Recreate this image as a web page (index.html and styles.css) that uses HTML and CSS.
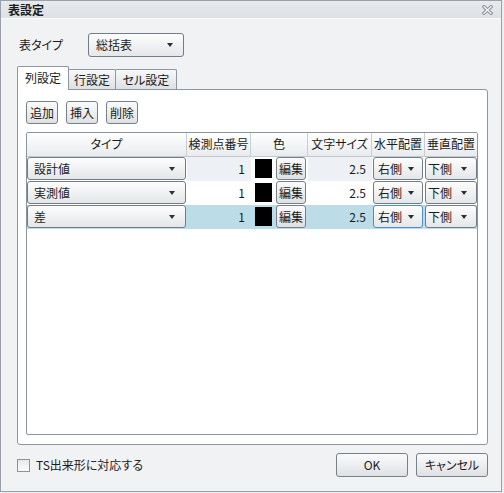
FILE: index.html
```html
<!DOCTYPE html>
<html lang="ja">
<head>
<meta charset="utf-8">
<title>表設定</title>
<link rel="stylesheet" href="styles.css">
</head>
<body>
<div class="window">
  <div class="titlebar">
    <span class="title">表設定</span>
    <svg class="close" width="11" height="10" viewBox="0 0 11 10">
      <path d="M2 1.8 L9 8.2 M9 1.8 L2 8.2" stroke="#8b9198" stroke-width="3.4" stroke-linecap="square" fill="none"/>
      <path d="M2 1.8 L9 8.2 M9 1.8 L2 8.2" stroke="#f3f4f5" stroke-width="1.4" stroke-linecap="square" fill="none"/>
    </svg>
  </div>
  <div class="body">
    <div class="type-row">
      <span class="type-label">表タイプ</span>
      <div class="combo combo-main"><span>総括表</span><span class="arrow"></span></div>
    </div>
    <div class="tabs">
      <div class="tab active tab1">列設定</div>
      <div class="tab tab2">行設定</div>
      <div class="tab tab3">セル設定</div>
    </div>
    <div class="panel">
      <div class="toolbar">
        <div class="btn">追加</div>
        <div class="btn">挿入</div>
        <div class="btn">削除</div>
      </div>
      <div class="grid">
        <div class="row head">
          <div class="th">タイプ</div>
          <div class="th">検測点番号</div>
          <div class="th">色</div>
          <div class="th">文字サイズ</div>
          <div class="th">水平配置</div>
          <div class="th last">垂直配置</div>
        </div>
        <div class="row row1">
          <div class="td"><div class="combo combo-type"><span>設計値</span><span class="arrow"></span></div></div>
          <div class="td num shade">1</div>
          <div class="td color"><span class="swatch"></span><div class="btn btn-edit">編集</div></div>
          <div class="td num shade">2.5</div>
          <div class="td"><div class="combo combo-h"><span>右側</span><span class="arrow"></span></div></div>
          <div class="td"><div class="combo combo-v"><span>下側</span><span class="arrow"></span></div></div>
        </div>
        <div class="row row2">
          <div class="td"><div class="combo combo-type"><span>実測値</span><span class="arrow"></span></div></div>
          <div class="td num">1</div>
          <div class="td color"><span class="swatch"></span><div class="btn btn-edit">編集</div></div>
          <div class="td num">2.5</div>
          <div class="td"><div class="combo combo-h"><span>右側</span><span class="arrow"></span></div></div>
          <div class="td"><div class="combo combo-v"><span>下側</span><span class="arrow"></span></div></div>
        </div>
        <div class="row row3 selected">
          <div class="td"><div class="combo combo-type"><span>差</span><span class="arrow"></span></div></div>
          <div class="td num">1</div>
          <div class="td color"><span class="swatch"></span><div class="btn btn-edit">編集</div></div>
          <div class="td num">2.5</div>
          <div class="td"><div class="combo combo-h focused"><span>右側</span><span class="arrow"></span></div></div>
          <div class="td"><div class="combo combo-v"><span>下側</span><span class="arrow"></span></div></div>
        </div>
      </div>
    </div>
    <div class="footer">
      <span class="check"></span>
      <span class="check-label">TS出来形に対応する</span>
      <span class="spacer"></span>
      <div class="btn dlg-btn">OK</div>
      <div class="btn dlg-btn">キャンセル</div>
    </div>
  </div>
</div>
</body>
</html>
```

FILE: styles.css
```css
* { box-sizing: border-box; }
html, body { margin: 0; padding: 0; background: #eceef0; }
body {
  font-family: "Noto Sans CJK JP", sans-serif;
  font-size: 12px;
  line-height: 16px;
  color: #1b1b1b;
  font-feature-settings: "palt";
}
.window {
  width: 502px;
  height: 492px;
  border: 1px solid #98a1aa;
  background: #f1f2f4;
  display: flex;
  flex-direction: column;
}
.titlebar {
  flex: none;
  height: 18px;
  background: linear-gradient(#e8eaed, #dde1e5);
  border-bottom: 1px solid #fbfcfc;
  display: flex;
  align-items: center;
  justify-content: space-between;
  padding: 0 8px 0 7px;
}
.title { font-weight: bold; }
.close { display: block; }
.body {
  flex: 1;
  min-height: 0;
  display: flex;
  flex-direction: column;
  padding: 0 13px 0 16px;
}
.type-row {
  flex: none;
  display: flex;
  align-items: center;
  height: 24px;
  margin-top: 14px;
  padding-left: 2px;
}
.type-label { width: 69px; }
.combo {
  display: flex;
  align-items: center;
  justify-content: space-between;
  border: 1px solid #717c88;
  border-radius: 3px;
  background: linear-gradient(#fdfdfd, #e4e6e9);
  padding: 0 10px 0 7px;
}
.arrow {
  width: 0;
  height: 0;
  border-left: 3.5px solid transparent;
  border-right: 3.5px solid transparent;
  border-top: 4px solid #2e2e2e;
}
.combo-main { width: 96px; height: 24px; }
.tabs {
  flex: none;
  display: flex;
  align-items: flex-end;
  height: 23px;
  margin-top: 9px;
}
.tab {
  height: 20px;
  border: 1px solid #8c97a2;
  border-bottom: none;
  border-radius: 2px 2px 0 0;
  background: linear-gradient(#f7f8f9, #dde0e4);
  text-align: center;
  line-height: 19px;
  margin-left: -1px;
}
.tab.active {
  height: 24px;
  margin-bottom: -1px;
  margin-left: 0;
  background: #fff;
  position: relative;
  z-index: 2;
  line-height: 22px;
}
.tab1 { width: 52px; }
.tab2 { width: 48px; }
.tab3 { width: 62px; }
.panel {
  flex: 1;
  min-height: 0;
  display: flex;
  flex-direction: column;
  background: #fff;
  border: 1px solid #8c97a2;
  border-radius: 0 3px 3px 3px;
  padding: 11px 9px 9px 8px;
}
.toolbar { flex: none; display: flex; gap: 8px; height: 23px; }
.btn {
  border: 1px solid #76808b;
  border-radius: 3px;
  background: linear-gradient(#fbfbfc, #dee1e4);
  height: 23px;
  line-height: 21px;
  padding: 0 3px;
  text-align: center;
}
.grid {
  flex: 1;
  min-height: 0;
  margin-top: 8px;
  border: 1px solid #8995a1;
  border-radius: 2px;
  background: #fff;
  overflow: hidden;
}
.row {
  display: grid;
  grid-template-columns: 160px 64px 57px 64px 53px 52px;
  height: 24px;
}
.head {
  background: linear-gradient(#ffffff, #e8ebee);
  border-bottom: 1px solid #c3c9cf;
  height: 24px;
}
.th {
  text-align: center;
  line-height: 22px;
  border-right: 1px solid #c9ced4;
  white-space: nowrap;
}
.th.last { border-right: none; }
.td { display: flex; align-items: flex-start; white-space: nowrap; }
.num { justify-content: flex-end; padding-right: 6px; line-height: 23px; }
.shade { background: #edf1f6; }
.selected .td { background: #bcdde8; }
.combo-type { width: 159px; height: 23px; padding: 0 10px 0 6px; }
.combo-h { width: 50px; height: 23px; margin-left: 1px; padding: 0 8px 0 4px; }
.combo-v { width: 52px; height: 23px; padding: 0 9px 0 2px; }
.combo.focused { border-color: #4d8fc0; }
.color { padding-left: 4px; }
.swatch {
  display: block;
  width: 17px;
  height: 19px;
  margin-top: 2px;
  background: #000;
}
.btn-edit { width: 30px; margin-left: 4px; padding: 0; }
.footer {
  flex: none;
  display: flex;
  align-items: center;
  height: 24px;
  margin-top: 8px;
  margin-bottom: 14px;
}
.check {
  width: 13px;
  height: 13px;
  border: 1px solid #8e9399;
  background: linear-gradient(#e6e9ec, #fafbfc);
  margin-right: 6px;
}
.spacer { flex: 1; }
.dlg-btn { width: 72px; height: 24px; line-height: 22px; margin-left: 8px; }
```
